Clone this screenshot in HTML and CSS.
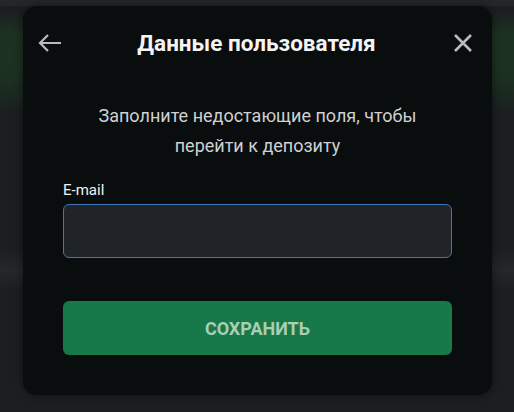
FILE: index.html
```html
<!DOCTYPE html>
<html lang="ru">
<head>
    <meta charset="UTF-8">
    <meta name="viewport" content="width=device-width, initial-scale=1.0">
    <title>Данные пользователя</title>
    <link rel="stylesheet" href="styles.css">
</head>
<body>
    <div class="backdrop">
        <div class="modal">
            <!-- шапка -->
            <div class="modal-header">
                <button class="icon-btn" aria-label="Назад">
                    <svg width="24" height="24" viewBox="0 0 24 24">
                        <path d="M23 12H2M10 4L2 12l8 8" fill="none" stroke="#b9bcbe" stroke-width="2.2"/>
                    </svg>
                </button>
                <h1>Данные пользователя</h1>
                <button class="icon-btn" aria-label="Закрыть">
                    <svg width="20" height="20" viewBox="0 0 20 20">
                        <path d="M2 2l16 16M18 2L2 18" fill="none" stroke="#b9bcbe" stroke-width="2.6"/>
                    </svg>
                </button>
            </div>

            <p class="hint">Заполните недостающие поля, чтобы<br>перейти к депозиту</p>

            <div class="form-group">
                <label for="email">E-mail</label>
                <input type="email" id="email">
            </div>

            <button class="btn">СОХРАНИТЬ</button>
        </div>
    </div>
</body>
</html>
```

FILE: styles.css
```css
html, body {
    margin: 0;
    height: 100%;
}
body {
    font-family: Roboto, 'Liberation Sans', sans-serif;
    background-color: #1b1f20;
    background-image:
        linear-gradient(180deg, #232729 0, #232729 6px, transparent 6px),
        linear-gradient(180deg, transparent 12px, #1d3321 35px, #1c3020 80px, transparent 112px),
        linear-gradient(180deg, transparent 250px, #25282a 270px, transparent 290px);
}
.backdrop {
    padding: 6px 22px 0 23px;
}
.modal {
    background-color: #090d0d;
    border-radius: 14px;
    padding: 0 40px 40px;
    box-shadow: 0 0 10px rgba(0, 0, 0, 0.5);
}
.modal-header {
    height: 74px;
    margin: 0 -23px 0 -25px;
    display: flex;
    align-items: center;
    justify-content: space-between;
}
.modal-header h1 {
    margin: 0;
    font-size: 22.5px;
    font-weight: 700;
    color: #f4f4f4;
}
.icon-btn {
    background: none;
    border: none;
    padding: 0;
    width: 24px;
    height: 24px;
    display: flex;
    align-items: center;
    justify-content: center;
    cursor: pointer;
}
.hint {
    margin: 21px 0 0;
    font-size: 18px;
    line-height: 30px;
    color: #cfd1d2;
    text-align: center;
}
.form-group {
    margin-top: 20px;
}
.form-group label {
    display: block;
    font-size: 15px;
    line-height: 18px;
    color: #f2f2f2;
    margin-bottom: 5px;
}
.form-group input {
    display: block;
    box-sizing: border-box;
    width: 100%;
    height: 54px;
    background-color: #202428;
    border: 1px solid #3c78b8;
    border-radius: 6px;
    outline: none;
    color: #fff;
    font-size: 16px;
    padding: 0 14px;
}
.btn {
    display: block;
    width: 100%;
    height: 54px;
    margin-top: 43px;
    background-color: #177849;
    color: #a7cfb3;
    border: none;
    border-radius: 6px;
    font-family: Roboto, 'Liberation Sans', sans-serif;
    font-size: 18px;
    font-weight: 700;
    cursor: pointer;
}
```
